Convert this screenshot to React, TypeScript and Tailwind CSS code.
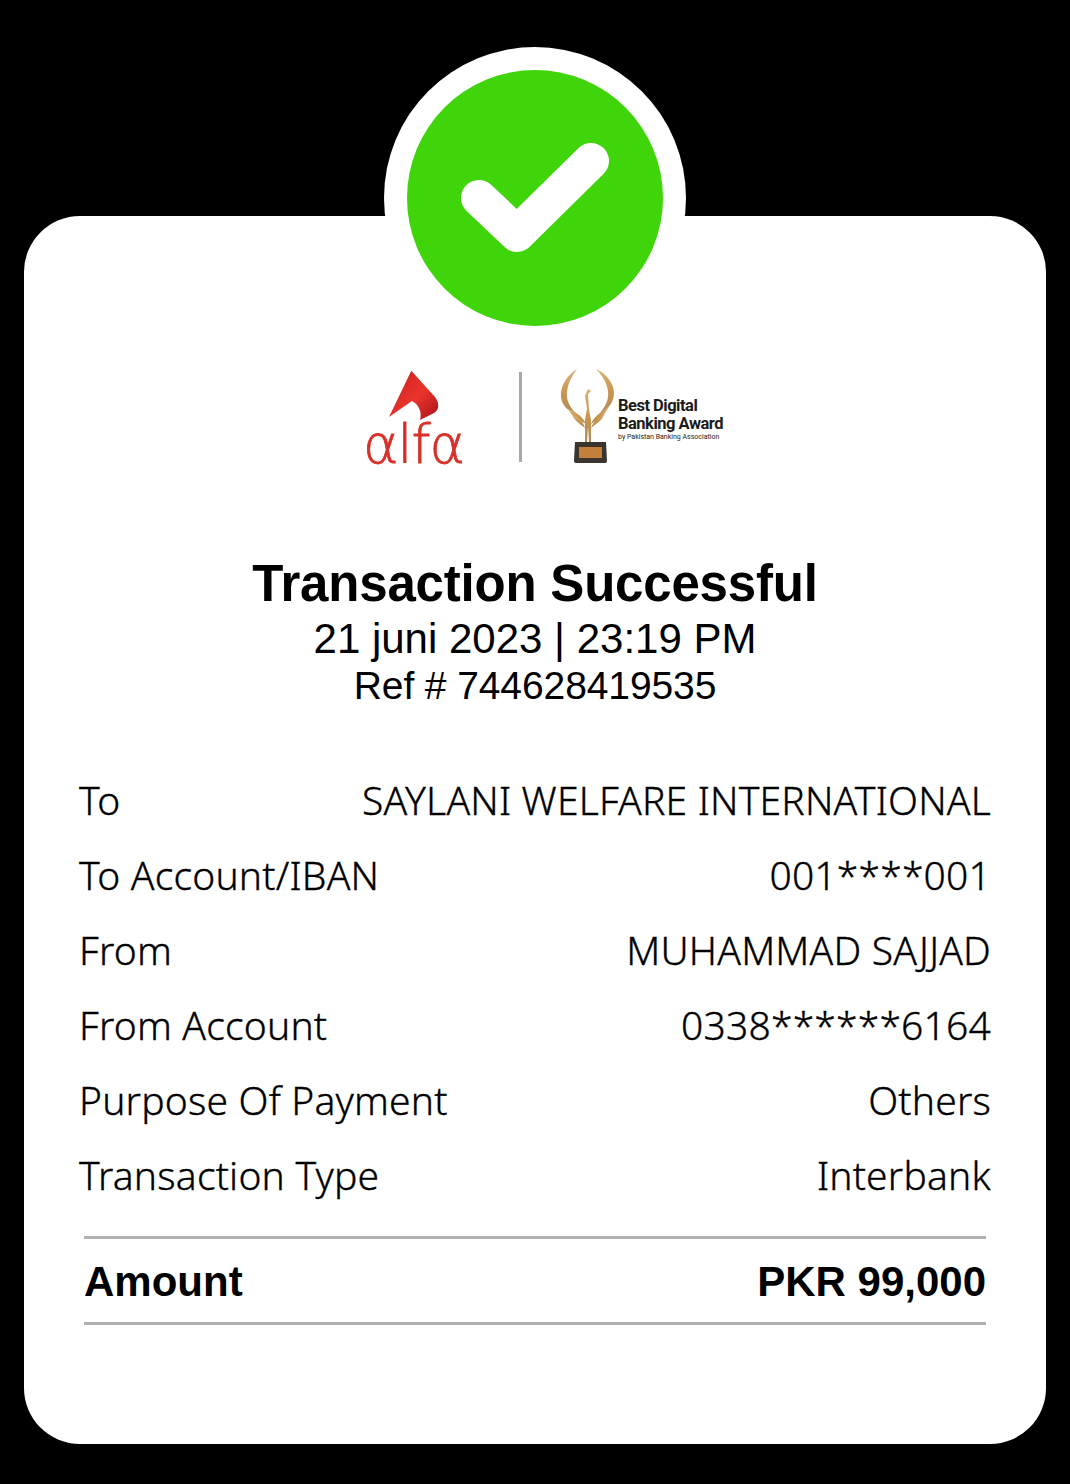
const ROWS = [
  { label: 'To', value: 'SAYLANI WELFARE INTERNATIONAL' },
  { label: 'To Account/IBAN', value: '001****001' },
  { label: 'From', value: 'MUHAMMAD SAJJAD' },
  { label: 'From Account', value: '0338******6164' },
  { label: 'Purpose Of Payment', value: 'Others' },
  { label: 'Transaction Type', value: 'Interbank' },
]

const AlfaMark = () => (
  <svg width="54" height="54" viewBox="0 0 54 54">
    <defs>
      <linearGradient id="alfa-red" x1="0" y1="0" x2="1" y2="1">
        <stop offset="0" stopColor="#c4201f" />
        <stop offset="0.55" stopColor="#ea342c" />
        <stop offset="1" stopColor="#a81318" />
      </linearGradient>
    </defs>
    <path d="M24.3 .7 L48 27 C53 34 52 40 47 43 L33 50 C35 44 33 35 25 31 L2 47 Z" fill="url(#alfa-red)" />
  </svg>
)

const Trophy = () => (
  <svg width="56" height="96" viewBox="0 0 56 96">
    <defs>
      <linearGradient id="gold" x1="0" y1="0" x2="0" y2="1">
        <stop offset="0" stopColor="#d8b27a" />
        <stop offset="0.5" stopColor="#c9974f" />
        <stop offset="1" stopColor="#b08a58" />
      </linearGradient>
    </defs>
    <g fill="url(#gold)">
      <path d="M17 1 C6 8 0 19 1 29 C2 38 9 44 17 46 C10 40 6 32 7 24 C8 15 12 8 17 1 Z" />
      <path d="M36 1 C47 6 54 16 54 25 C54 35 47 42 40 45 C46 38 49 31 48 23 C47 15 42 7 36 1 Z" />
      <path d="M8 41 C14 43 22 47 26 56 C20 52 12 49 8 41 Z" />
      <path d="M49 38 C44 43 35 46 31 56 C37 52 45 48 49 38 Z" />
      <path d="M28 21 L31 23 L28 26 L29 42 L31 52 L31 74 L29 74 L28 58 L27 74 L25 74 L25 52 L27 40 L25 28 Z" />
      <path d="M12 47 C17 48 23 52 25 60 C20 56 15 53 12 47 Z" />
      <path d="M45 45 C40 49 34 52 31 60 C36 56 42 53 45 45 Z" />
    </g>
    <path d="M15 74 H46 L47 93 Q47 95 45 95 H16 Q14 95 14 93 Z" fill="#3a342f" />
    <rect x="19" y="79" width="23" height="11" fill="#c4803a" />
  </svg>
)

const App = () => {
  return (
    <div className="w-[1070px] h-[1484px] bg-black pt-[216px] px-[24px] font-['Liberation_Sans',sans-serif] text-black">
      <div className="relative h-[1228px] bg-white rounded-[56px] pt-[154px] px-[55px]">
        {/* badge sits half out of the card */}
        <div className="absolute left-[360px] top-[-169px] w-[302px] h-[302px] rounded-full bg-white flex items-center justify-center">
          <div className="w-[256px] h-[256px] rounded-full bg-[#40d50a] flex items-center justify-center">
            <svg width="150" height="112" viewBox="0 0 150 112">
              <path d="M19 56 L57 92 L131 19" fill="none" stroke="#fff" strokeWidth="36" strokeLinecap="round" strokeLinejoin="round" />
            </svg>
          </div>
        </div>

        <div className="flex items-start h-[100px] pl-[282px]">
          <div className="w-[105px] flex flex-col items-center">
            <AlfaMark />
            <div className="text-[#d8302a] text-[54px] leading-[44px] font-['DejaVu_Sans',sans-serif] font-extralight [-webkit-text-stroke:0.8px_#d8302a] tracking-[-1px] mt-[-1px] whitespace-nowrap">αlfα</div>
          </div>
          <div className="w-[3px] h-[90px] bg-[#a9a9a9] mt-[2px] ml-[53px]" />
          <div className="ml-[38px] mt-[-2px]">
            <Trophy />
          </div>
          <div className="ml-[2px] mt-[27px] font-['Roboto',sans-serif] font-bold text-[#1c1c1c] text-[16.5px] leading-[18px] tracking-[-0.5px] whitespace-nowrap">
            <div>Best Digital</div>
            <div>Banking Award</div>
            <div className="text-[7px] leading-[8px] font-normal tracking-normal">by Pakistan Banking Association</div>
          </div>
        </div>

        <div className="mt-[86px] -mx-[55px] text-center">
          <h1 className="text-[51px] leading-[56px] font-bold tracking-[-0.2px]">Transaction Successful</h1>
          <div className="text-[42px] leading-[48px] mt-[3px]">21 juni 2023 | 23:19 PM</div>
          <div className="text-[39px] leading-[44px] mt-[1px] tracking-[-0.1px]">Ref # 744628419535</div>
        </div>

        <div className="mt-[55px]">
          {ROWS.map(row => (
            <div key={row.label} className="flex justify-between items-center h-[75px] font-['Noto_Sans',sans-serif] font-light [-webkit-text-stroke:0.35px_#000] text-[39px] tracking-[0.2px] text-black whitespace-nowrap">
              <span>{row.label}</span>
              <span>{row.value}</span>
            </div>
          ))}
        </div>

        <div className="mx-[5px] mt-[23px] h-[89px] pt-[1px] border-y-[3px] border-[#b0b0b0] flex justify-between items-center font-bold text-[42px]">
          <span>Amount</span>
          <span>PKR 99,000</span>
        </div>
      </div>
    </div>
  )
}

export default App
